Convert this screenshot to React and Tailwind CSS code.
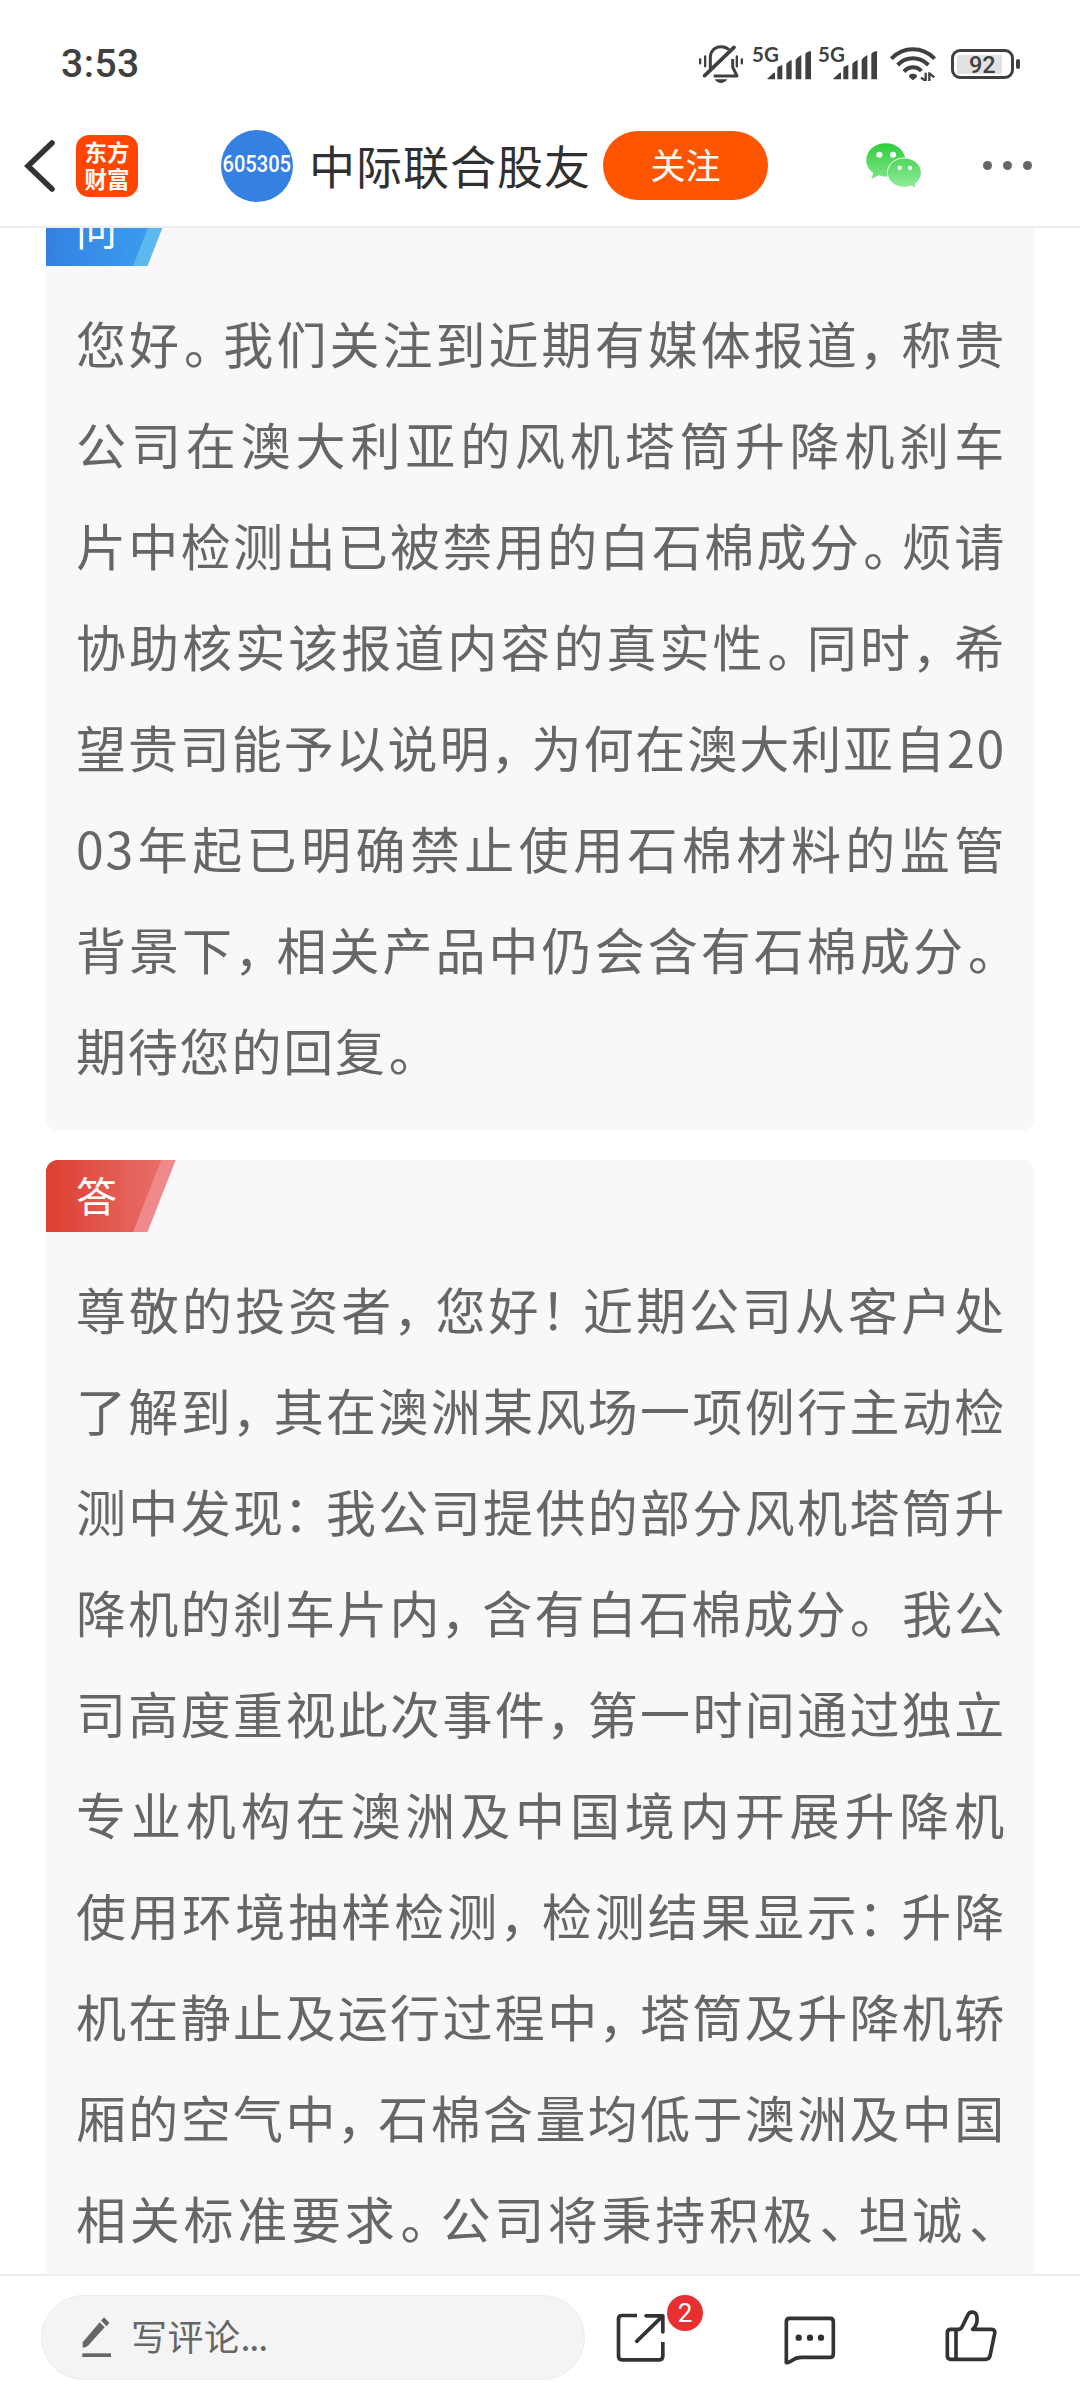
import React from "react";

const CJK = "font-['Noto_Sans_CJK_SC',sans-serif]";

const QUESTION = [
  "您好。我们关注到近期有媒体报道，称贵",
  "公司在澳大利亚的风机塔筒升降机刹车",
  "片中检测出已被禁用的白石棉成分。烦请",
  "协助核实该报道内容的真实性。同时，希",
  "望贵司能予以说明，为何在澳大利亚自20",
  "03年起已明确禁止使用石棉材料的监管",
  "背景下，相关产品中仍会含有石棉成分。",
  "期待您的回复。",
];

const ANSWER = [
  "尊敬的投资者，您好！近期公司从客户处",
  "了解到，其在澳洲某风场一项例行主动检",
  "测中发现：我公司提供的部分风机塔筒升",
  "降机的刹车片内，含有白石棉成分。 我公",
  "司高度重视此次事件，第一时间通过独立",
  "专业机构在澳洲及中国境内开展升降机",
  "使用环境抽样检测，检测结果显示：升降",
  "机在静止及运行过程中，塔筒及升降机轿",
  "厢的空气中，石棉含量均低于澳洲及中国",
  "相关标准要求。公司将秉持积极、坦诚、",
];

const PUNCT = {
  "，": "ml-[-1px] tracking-[-9px]",
  "。": "ml-[2px] tracking-[-12px]",
  "、": "ml-[3px] tracking-[-13px]",
  "：": "ml-[-2px] tracking-[-8px]",
  "！": "ml-[-1px] tracking-[-9px]",
};

function Line({ text, last }) {
  const parts = text.split(/([，。、：！])/).filter(Boolean);
  return (
    <p className={last ? "whitespace-nowrap" : "whitespace-nowrap [text-align-last:justify]"}>
      {parts.map((part, i) =>
        PUNCT[part] ? (
          <span key={i} className={PUNCT[part]}>
            {part}
          </span>
        ) : (
          part
        )
      )}
    </p>
  );
}

function Tag({ label, id, from, to, edge }) {
  return (
    <div className="relative h-[72px] w-[130px]">
      <svg className="absolute inset-0" width="130" height="72" viewBox="0 0 130 72">
        <defs>
          <linearGradient id={id} x1="0" y1="0" x2="1" y2="0">
            <stop offset="0" stopColor={from} />
            <stop offset="1" stopColor={to} />
          </linearGradient>
        </defs>
        <path d="M0 0H129.7L101.5 72H0z" fill={edge} />
        <path d="M0 0H115.3L87 72H0z" fill={`url(#${id})`} />
      </svg>
      <span className="relative ml-[30px] block text-[41px] leading-[69px] text-white">{label}</span>
    </div>
  );
}

function Card({ tag, lines, closed }) {
  return (
    <section className="overflow-hidden rounded-xl bg-[#f8f8fa] pb-[31px]">
      {tag}
      <div className="ml-[30px] mt-[26px] w-[930px] text-[50px] leading-[101px] tracking-[1.800px] text-[#666]">
        {lines.map((l, i) => (
          <Line key={l} text={l} last={closed && i === lines.length - 1} />
        ))}
      </div>
    </section>
  );
}

function BellOff() {
  return (
    <svg width="44" height="38" viewBox="0 0 132 114" fill="none" stroke="#404040" strokeLinecap="round">
      <path d="M34 72V38C34 16 50 5 66 5C76 5 84 8 90 14" strokeWidth="9" strokeLinecap="butt" />
      <path d="M101 42V66L114 93H44" strokeWidth="9" strokeLinejoin="round" strokeLinecap="butt" />
      <path d="M17 92L105 7" strokeWidth="11" />
      <path d="M47 103H85C80 111 73 114 66 114C59 114 52 111 47 103z" fill="#404040" stroke="none" />
      <path d="M3.500 43V55M18.500 34V64M113.500 34V64M128.500 43V55" strokeWidth="7" />
    </svg>
  );
}

function Signal() {
  return (
    <div className="relative h-[38px] w-[60px]">
      <span className="absolute left-0 top-[-1px] font-[Lato,sans-serif] text-[20.500px] font-bold leading-[20px] text-[#404040]">
        5G
      </span>
      <svg className="absolute left-[15px] top-[6px]" width="45" height="30" viewBox="0 0 135 90" fill="#404040">
        <path d="M4 80L20 65Q24 63 24 68V85H4Q1 85 1 82zM31 50Q32 47 46 42V85H31zM58 39Q60 34 74 27V85H58zM86 27Q88 21 103 12V85H86zM115 10Q117 2 132 0V85H115z" />
      </svg>
    </div>
  );
}

function Wifi() {
  return (
    <svg width="46" height="34" viewBox="0 0 138 102" fill="none" stroke="#404040" strokeWidth="12">
      <path d="M4 35Q31 7 68.500 7Q106 7 134 35" />
      <path d="M23 54Q42 34 68.500 34Q95 34 115 54" />
      <path d="M42 74Q53 61 68.500 61Q84 61 94 72" />
      <path d="M57 90Q56 80 69 80Q82 80 81 90L69 100z" fill="#404040" stroke="none" />
      <path d="M107 77V102M93 92L107 102M118 102V76M118 79L133 91" strokeWidth="7" />
    </svg>
  );
}

function Battery() {
  return (
    <div className="flex items-center gap-[2px]">
      <div className="flex h-[30px] w-[63px] rounded-[9px] border-[3px] border-[#404040] p-[3px]">
        <div className="h-[19px] w-[45px] bg-[#e2e2e2] pl-[12px] font-[Roboto,sans-serif] text-[23.500px] font-medium leading-[21px] text-[#404040]">
          92
        </div>
      </div>
      <div className="h-[10px] w-[4px] rounded-[2px] bg-[#404040]" />
    </div>
  );
}

function WeChat() {
  return (
    <svg width="56" height="46" viewBox="0 0 168 138">
      <defs>
        <linearGradient id="wc" gradientUnits="userSpaceOnUse" x1="0" y1="0" x2="0" y2="135">
          <stop offset="0" stopColor="#2fcd3c" />
          <stop offset="1" stopColor="#92eb9a" />
        </linearGradient>
      </defs>
      <path
        d="M59 1C27 1 1 23 1 52C1 68 9 81 22 90L16 108L38 97Q48 101 59 101C92 101 118 80 118 52S92 1 59 1z"
        fill="url(#wc)"
      />
      <path
        d="M115 45C87 45 64 64 64 89S87 133 115 133Q125 133 135 129L151 136L147 123C159 115 166 102 166 89C166 64 143 45 115 45z"
        fill="url(#wc)"
        stroke="#fff"
        strokeWidth="3"
      />
      <g fill="#fff">
        <circle cx="40" cy="35" r="9" />
        <circle cx="81" cy="35" r="9" />
        <circle cx="101" cy="75" r="6.500" />
        <circle cx="132" cy="75" r="6.500" />
      </g>
    </svg>
  );
}

function Pencil() {
  return (
    <svg width="30" height="41" viewBox="0 0 90 123" fill="#666">
      <path d="M2 76L53 16L68 31L18 86Q13 91 2 92z" />
      <path d="M57 11L66 1L82 17L74 28z" />
      <rect x="1" y="109" width="86" height="11" />
    </svg>
  );
}

function ShareIcon() {
  return (
    <svg width="50" height="50" viewBox="0 0 150 150" fill="none" stroke="#333" strokeWidth="11">
      <path d="M63 7.500H18Q7.500 7.500 7.500 18V129Q7.500 140.500 18 140.500H130Q140.500 140.500 140.500 129V87" />
      <path d="M90 8.500H140.500V57" strokeLinecap="round" strokeLinejoin="round" />
      <path d="M62 85L138 11" strokeLinecap="round" />
    </svg>
  );
}

function CommentIcon() {
  return (
    <svg width="52" height="50" viewBox="0 0 156 150" fill="none" stroke="#333" strokeWidth="11" strokeLinejoin="round">
      <path d="M7 140V17Q7 7 17 7H138Q148 7 148 17V113Q148 124 138 124H52Q36 124 25 133Q14 141 7 140z" />
      <g fill="#333" stroke="none">
        <circle cx="44" cy="65" r="9.500" />
        <circle cx="78" cy="65" r="9.500" />
        <circle cx="111" cy="65" r="9.500" />
      </g>
    </svg>
  );
}

function ThumbIcon() {
  return (
    <svg width="53" height="53" viewBox="0 0 159 159" fill="none" stroke="#333" strokeWidth="11" strokeLinejoin="round">
      <path d="M17 58H43Q49 56 53 47L68 16C74 2 92 4 95 17C98 31 95 47 83 58H140Q151 58 149 70L135 138Q132 148 121 148H18Q7 148 7 138V68Q7 58 17 58zM33 58V148" />
    </svg>
  );
}

export default function App() {
  return (
    <div className={`flex h-[2400px] w-[1080px] flex-col overflow-hidden bg-white ${CJK}`}>
      <header className="h-[228px] shrink-0 border-b-2 border-[#ededee]">
        <div className="flex h-[128px] items-center pl-[61px] pr-[60px]">
          <span className="font-[Roboto,sans-serif] text-[39px] font-medium leading-[44px] tracking-[0.500px] text-[#404040]">
            3:53
          </span>
          <div className="ml-auto flex items-center">
            <BellOff />
            <div className="ml-[9px] flex gap-[6px]">
              <Signal />
              <Signal />
            </div>
            <div className="ml-[12px]">
              <Wifi />
            </div>
            <div className="ml-[15px]">
              <Battery />
            </div>
          </div>
        </div>
        <div className="flex h-[75px] items-center pl-[24px]">
          <svg width="32" height="52" viewBox="0 0 32 52" fill="none" stroke="#333" strokeWidth="5.500">
            <path d="M28 3L4 26L28 49" strokeLinecap="round" />
          </svg>
          <div className="ml-[20px] grid h-[62px] w-[62px] content-center rounded-[13px] bg-[#ff4500] pb-[2px] text-center text-[22.500px] font-bold leading-[27px] text-white">
            <span>东方</span>
            <span>财富</span>
          </div>
          <div className="ml-[83px] flex h-[72px] w-[72px] items-center justify-center rounded-full bg-[#3481e2]">
            <span className="-mt-[2px] scale-x-[0.82] font-[Roboto,sans-serif] text-[24.500px] font-medium leading-none text-white">
              605305
            </span>
          </div>
          <h1 className="-mt-[3px] ml-[16px] whitespace-nowrap text-[46px] leading-[72px] tracking-[1px] text-[#303030]">
            中际联合股友
          </h1>
          <button className="ml-[12px] h-[69px] w-[165px] shrink-0 rounded-full bg-[#ff5500] pb-[3px] text-[35px] leading-[66px] text-white">
            关注
          </button>
          <div className="ml-[98px]">
            <WeChat />
          </div>
          <div className="ml-[61px] flex gap-[11px]">
            <i className="size-[9px] rounded-full bg-[#666]" />
            <i className="size-[9px] rounded-full bg-[#666]" />
            <i className="size-[9px] rounded-full bg-[#666]" />
          </div>
        </div>
      </header>

      <main className="min-h-0 flex-1 overflow-hidden px-[46px]">
        <div className="-mt-[34px] flex flex-col gap-[29px]">
          <Card
            closed
            lines={QUESTION}
            tag={<Tag label="问" id="ask" from="#3480e2" to="#3ba0f0" edge="#5cb8ef" />}
          />
          <Card lines={ANSWER} tag={<Tag label="答" id="reply" from="#dc3f30" to="#e86e69" edge="#f08a8a" />} />
        </div>
      </main>

      <footer className="flex h-[126px] shrink-0 items-start border-t-2 border-[#ededee] pl-[41px]">
        <div className="mt-[19px] flex h-[85px] w-[544px] items-center rounded-full border border-[#ececec] bg-[#f4f4f4] pl-[40px]">
          <Pencil />
          <span className="-mt-[5px] ml-[19px] text-[36px] leading-[50px] tracking-[0.500px] text-[#666]">
            写评论<span className="tracking-[-1.200px]">...</span>
          </span>
        </div>
        <div className="relative ml-[31px] mt-[37px]">
          <ShareIcon />
          <span className="absolute left-[51px] top-[-18px] size-[36px] rounded-full bg-[#e83032] text-center font-[Roboto,sans-serif] text-[26px] leading-[36px] text-white">
            2
          </span>
        </div>
        <div className="ml-[118px] mt-[40px]">
          <CommentIcon />
        </div>
        <div className="ml-[109px] mt-[34px]">
          <ThumbIcon />
        </div>
      </footer>
    </div>
  );
}
